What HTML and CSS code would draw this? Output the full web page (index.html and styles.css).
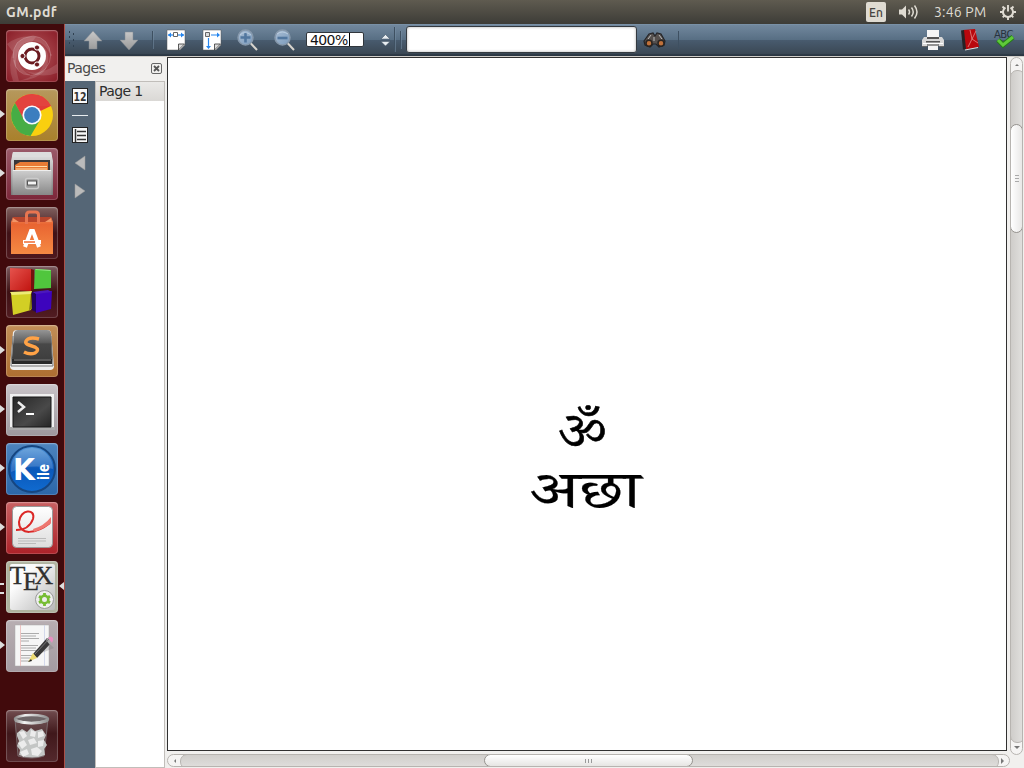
FILE: index.html
```html
<!DOCTYPE html>
<html lang="en">
<head>
<meta charset="utf-8">
<title>GM.pdf</title>
<link rel="stylesheet" href="styles.css">
</head>
<body>
<svg class="defs" width="0" height="0" aria-hidden="true">
  <defs>
    <linearGradient id="metal" x2="0" y2="1"><stop stop-color="#cfcfcf"/><stop offset="1" stop-color="#888"/></linearGradient>
    <linearGradient id="steel" x2="0" y2="1"><stop stop-color="#e6e6e6"/><stop offset="1" stop-color="#777"/></linearGradient>
    <linearGradient id="arrow" x2="0" y2="1"><stop stop-color="#c9c9c9"/><stop offset="1" stop-color="#999"/></linearGradient>
    <linearGradient id="orange" x2="0" y2="1"><stop stop-color="#f08a58"/><stop offset=".2" stop-color="#e96532"/><stop offset="1" stop-color="#f58a43"/></linearGradient>
    <linearGradient id="dark" x2="0" y2="1"><stop stop-color="#959595"/><stop offset=".4" stop-color="#5c5c5c"/><stop offset=".45" stop-color="#484848"/><stop offset="1" stop-color="#3d3d3d"/></linearGradient>
    <linearGradient id="screen" x2="1" y2="1"><stop stop-color="#272727"/><stop offset=".6" stop-color="#494949"/><stop offset="1" stop-color="#252525"/></linearGradient>
    <linearGradient id="blue" x2="0" y2="1"><stop stop-color="#5799d8"/><stop offset=".5" stop-color="#0b58b9"/><stop offset="1" stop-color="#106bd0"/></linearGradient>
    <linearGradient id="paper" x2="0" y2="1"><stop stop-color="#fff"/><stop offset="1" stop-color="#ddd"/></linearGradient>
    <linearGradient id="texpaper" x2="1" y2="1"><stop offset=".3" stop-color="#fbfbfb"/><stop offset="1" stop-color="#b9b9b9"/></linearGradient>
    <linearGradient id="red" x2="1" y2="1"><stop stop-color="#e6534d"/><stop offset="1" stop-color="#c11410"/></linearGradient>
    <linearGradient id="rim" x2="1" y2="0"><stop stop-color="#8d8d8d"/><stop offset=".3" stop-color="#f2f2f2"/><stop offset=".6" stop-color="#c9c9c9"/><stop offset="1" stop-color="#8d8d8d"/></linearGradient>
    <linearGradient id="lens" x2="1" y2="1"><stop stop-color="#a9bdd3"/><stop offset="1" stop-color="#7b9bbd"/></linearGradient>
  </defs>
</svg>

<header class="panel">
  <span class="panel-title">GM.pdf</span>
  <div class="indicators">
    <span class="lang">En</span>
    <svg class="volume" width="21" height="16" viewBox="0 0 21 16"><path d="M1 5.500h3l4-4v13l-4-4H1z" fill="#dfdbd2"/><path d="M10.500 5.500q2 2.500 0 5M13.500 3.500q3.500 4.500 0 9M16.500 1.500q5 6.500 0 13" fill="none" stroke="#dfdbd2" stroke-width="1.500"/></svg>
    <span class="clock">3:46 PM</span>
    <svg class="session" width="16" height="16" viewBox="0 0 16 16"><path d="M5.500 3.700A5 5 0 1 0 10.500 3.700" fill="none" stroke="#dfdbd2" stroke-width="2"/><path d="M8 1v6.500M2.500 2.500l2 2M13.500 2.500l-2 2M0 8h3M13 8h3M2.700 13.300l2-2M13.300 13.300l-2-2M8 13v3" fill="none" stroke="#dfdbd2" stroke-width="1.900"/></svg>
  </div>
</header>

<div class="desktop">
  <nav class="launcher">
    <div class="tile dash"><svg viewBox="0 0 52 52"><g fill="#fff" fill-opacity=".13"><path d="M7 28Q6 8 27 6Q43 7 45 26Q39 11 26 11Q10 13 12 30Q14 40 24 45Q8 43 7 28z"/><path d="M1 14Q14 4 30 7L26 12Q14 12 11 25Q8 34 13 51H7Q1 34 7 22z"/><path d="M36 15Q46 24 40 39Q32 50 12 51Q33 46 37 36Q42 24 36 15z"/><path d="M14 38Q30 49 51 34V43Q32 50 14 38z"/></g><g fill="none" stroke="#fff" stroke-opacity=".25" stroke-width=".7"><path d="M7 28Q6 8 27 6Q43 7 45 26M8 30Q10 45 24 45M45 24Q44 43 24 46"/></g><circle cx="26" cy="26" r="14" fill="#fff"/><circle cx="26" cy="26" r="7" fill="none" stroke="#6b1a20" stroke-width="3"/><g fill="#6b1a20" stroke="#fff"><circle cx="16.500" cy="26" r="2.600"/><circle cx="31" cy="17.500" r="2.600"/><circle cx="31" cy="34.500" r="2.600"/></g></svg></div>
    <div class="tile chrome running"><svg viewBox="0 0 52 52"><circle cx="26" cy="26" r="21" fill="#f9cf0f"/><path d="M26 26L9 14A21 21 0 0 1 44.800 17z" fill="#e33b37"/><path d="M9 14Q16 5 26 5Q39 5 45 17H26L17 30z" fill="#e3423e"/><path d="M17.500 30L9 14A21 21 0 0 0 24.500 47L34 31z" fill="#46ad45"/><circle cx="26" cy="26" r="9.600" fill="#f8fbff"/><circle cx="26" cy="26" r="7.900" fill="#3c7ebf"/></svg></div>
    <div class="tile files running"><svg viewBox="0 0 52 52"><path d="M7 4h38l2 9v34H5V13z" fill="url(#steel)"/><path d="M7 4h38l1 5H6z" fill="#ddd"/><path d="M8 12h36v12H8z" fill="#39383a"/><path d="M9 17l5-3h28v9H9z" fill="#e77b35"/><path d="M10 18.500h31M10 21h31" stroke="#ffddaa"/><path d="M6.500 22h39v25h-39z" fill="url(#metal)"/><path d="M7 22.500h38" stroke="#eee"/><rect x="19.500" y="30.500" width="13" height="10" rx="2" fill="#999" stroke="#ccc" stroke-width="1.500"/><rect x="21.500" y="33" width="9" height="4" fill="#f5f5f5" stroke="#555"/></svg></div>
    <div class="tile software"><svg viewBox="0 0 52 52"><path d="M7 10h38l2 5v32H5V15z" fill="url(#orange)"/><path d="M7 10l-1 5h40l-1-5z" fill="#b8452c"/><path d="M7 11l6 4H6zM45 11l-6 4h7z" fill="#f29566"/><path d="M20.500 17V8q0-3 3-3h6q3 0 3 3v9" fill="none" stroke="#e87550" stroke-width="3"/><path d="M19 40L25 24h2l6 16" fill="none" stroke="#fff" stroke-width="4"/><path d="M17 35h18" stroke="#fff" stroke-width="4"/><path d="M18 35h11" stroke="#ef6a32" stroke-width="1.500"/></svg></div>
    <div class="tile blocks"><svg viewBox="0 0 52 52"><path d="M4 2l21 1v22l-21-1z" fill="url(#red)"/><path d="M25 3l3 1v19l-3 2z" fill="#74120e"/><path d="M29 3l16 1v18l-17 1z" fill="#50c63d"/><path d="M29 3l16 1-1 1-14-1z" fill="#91e783"/><path d="M5 27l20-1v18L7 49z" fill="#d2cf25"/><path d="M4 26l22-1-1 3-19 1z" fill="#eeeb76"/><path d="M25 26l1 17-3 1 2-17z" fill="#888415"/><path d="M29 27l17-2-1 18-15 4z" fill="#3d04bd"/><path d="M26 26l16-2 4 2-16 2z" fill="#4b18bd"/><path d="M26 26l4 2v18l-4-2z" fill="#210163"/></svg></div>
    <div class="tile sublime running"><svg viewBox="0 0 52 52"><path d="M7 7q1-2 4-2h30q3 0 4 2l3 34q0 4-4 4H8q-4 0-4-4z" fill="#eee"/><path d="M7 11L5 41h42l-2-30" fill="none" stroke="#777"/><path d="M8 8q1-3 4-3h29q4 0 4 4l1 24q0 3-3 3H9q-3 0-3-3z" fill="url(#dark)"/><path d="M6 34h40v5H6z" fill="#292929"/><path d="M8 35h37" stroke="#888"/><path d="M33 14q-7-2-11 0-5 4 1 6l6 2q5 3 0 6-5 2-11-1" fill="none" stroke="#ffa246" stroke-width="3.500"/></svg></div>
    <div class="tile terminal running"><svg viewBox="0 0 52 52"><path d="M4 10h44v34H4z" fill="#f0f0f0"/><path d="M3 43h46v3H3z" fill="#aaa"/><path d="M7 13h38v30H7z" fill="url(#screen)" stroke="#171717"/><path d="M12 18l6 5-6 5" fill="none" stroke="#eee" stroke-width="2.500"/><path d="M20 30h8" stroke="#fff" stroke-width="2"/></svg></div>
    <div class="tile kile running"><svg viewBox="0 0 52 52"><circle cx="26" cy="26" r="23" fill="url(#blue)" stroke="#164681" stroke-width="2"/><path d="M5 26a21 21 0 0 1 42 0Q26 20 5 29" fill="#fff" opacity=".16"/><text class="kile-k" x="7" y="37" textLength="22" lengthAdjust="spacingAndGlyphs">K</text><text class="kile-ile" transform="translate(43 37) rotate(-90)" textLength="16" lengthAdjust="spacingAndGlyphs">ile</text></svg></div>
    <div class="tile reader running"><svg viewBox="0 0 52 52"><rect x="6.500" y="4.500" width="40" height="41" rx="4" fill="url(#paper)" stroke="#999"/><path d="M10 28Q23 28 27 17C30 6 14 7 13 20c0 14 17 12 31 1" fill="none" stroke="#db2827" stroke-width="2"/><path d="M27 27Q38 24 45 15v6q-7 6-17 9z" fill="#ed7770"/><path d="M12 36.500h28M12 39h28M12 41.500h18" stroke="#bbb"/></svg></div>
    <div class="tile tex running multi active"><svg viewBox="0 0 52 52"><rect x="4" y="3" width="45" height="46" rx="2" fill="url(#texpaper)"/><text class="tex-t" x="3.500 17 28.500" y="23 29 23">TEX</text><circle cx="38.500" cy="38.500" r="9" fill="#eee" stroke="#999"/><circle cx="38.500" cy="38.500" r="3.800" fill="none" stroke="#77bd35" stroke-width="2.600"/><path d="M38.500 32v3M38.500 42v3M33 35.300l2.500 1.500M41.500 40.200l2.500 1.500M33 41.700l2.500-1.500M41.500 36.800l2.500-1.500" stroke="#77bd35" stroke-width="2.800"/></svg></div>
    <div class="tile editor running"><svg viewBox="0 0 52 52"><path d="M9 5h34v41H9z" fill="#f6f6f6" stroke="#aaa" stroke-width=".5"/><path d="M14.500 5v41" stroke="#e9b0ad" stroke-width=".7"/><path d="M38.500 5v41" stroke="#c5cde7" stroke-width=".7"/><path d="M15 13.500h18M15 16h15M15 18.500h18M15 21h8M15 25.500h17M15 28h15M15 30.500h17M15 35.500h12M15 38h9M15 41h8" stroke="#999" stroke-width=".8"/><path d="M26 39l18-15 4 4-15 6z" fill="#777" opacity=".3"/><path d="M27 34L41 18l5 4-15 16z" fill="#393939"/><path d="M27 33l4 5-9 4z" fill="#ecdb73"/><path d="M22 42l3-3 1 2z" fill="#222"/><path d="M40 20l3-3 5 4-4 4z" fill="#aaa"/><path d="M42 18q3-3 5 0 1 2-1 5z" fill="#e98ec1"/><path d="M29 34l14-15" stroke="#777"/></svg></div>
    <div class="tile trash"><svg viewBox="0 0 52 52"><path d="M9 9l3 37q14 4 26 0l4-37" fill="#aaa" fill-opacity=".2" stroke="#81777a" stroke-width=".8"/><path d="M11 23l5-4 5 3 4-4 4 3 7-2 4 6-2 5 3 5-3 4 1 6q-13 5-26 0l1-5-3-4 2-5-2-5z" fill="#c4c6c5"/><path d="M13 22l5-1 3 5-4 3zM25 20l5 2-1 5-5-1zM32 22l5-1 1 5-6 2zM12 33l6-3 3 5-5 4zM22 30l6-2 3 5-7 2zM32 31l6-1-1 6-5 1zM14 42l7-3 2 5-6 3zM25 39l6-2 5 4-4 5-6-1z" fill="#ececec"/><ellipse cx="25.500" cy="9" rx="16.500" ry="4" fill="#6e6668" stroke="url(#rim)" stroke-width="2.500"/><path d="M8 8q17 8 35 0l-1 4q-16 5-33 0z" fill="url(#rim)"/></svg></div>
  </nav>

  <main class="app">
    <div class="toolbar">
      <svg class="tools" width="959" height="32" viewBox="65 24 959 32">
        <path d="M69 32h1M73 34h1M69 37h1M73 40h1M69 43h1M73 46h1" stroke="#304050" stroke-width="2"/>
        <path d="M93 31l9 10h-5v8h-8v-8h-5zM129 50l-9-10h5v-8h8v8h5z" fill="url(#arrow)" stroke="#808890" stroke-width=".5"/>
        <path d="M152.500 31v18M394.500 27v25M400.500 31v18M678.500 31v18" stroke="#3e5061"/>
        <path d="M153.500 31v18M395.500 27v25M401.500 31v18" stroke="#7890a5" stroke-opacity=".5"/>
        <path d="M167 30h18v15l-5 5h-13z" fill="#fff" stroke="#555" stroke-width=".5"/><path d="M178.500 50v-6h6z" fill="#ddd" stroke="#333" stroke-width=".8"/><path d="M168 35h16" stroke="#2586ef" stroke-width="1.200"/><path d="M168 35l3-2.500v5zM184 35l-3-2.500v5z" fill="#2586ef"/><path d="M173.500 32.500h4v4h-4z" fill="#fff" stroke="#666"/>
        <path d="M203 30h18v15l-5 5h-13z" fill="#fff" stroke="#555" stroke-width=".5"/><path d="M214.500 50v-6h6z" fill="#ddd" stroke="#333" stroke-width=".8"/><path d="M211 35h8M208.500 38v8" stroke="#2586ef" stroke-width="1.200"/><path d="M220 35l-3-2.500v5zM208.500 49l-2.500-3h5z" fill="#2586ef"/><path d="M205.500 32.500h4v4h-4z" fill="#ddd" stroke="#666"/>
        <g><path d="M250.500 43l6.500 7" stroke="#d8d4cd" stroke-width="2"/><circle cx="245.500" cy="37.500" r="7.500" fill="url(#lens)" stroke="#8698ab" stroke-width="1.500"/><path d="M240.500 37.500h10M245.500 32.500v10" stroke="#52779f" stroke-width="2.600"/><path d="M240 35q5-5 11 0" fill="none" stroke="#c4d4e4" stroke-width=".8"/></g>
        <g><path d="M287.500 43l6.500 7" stroke="#d8d4cd" stroke-width="2"/><circle cx="282.500" cy="37.500" r="7.500" fill="url(#lens)" stroke="#8698ab" stroke-width="1.500"/><path d="M277.500 38h10" stroke="#52779f" stroke-width="2.600"/><path d="M277 34q5-4 11 0" fill="none" stroke="#c4d4e4" stroke-width=".8"/></g>
        <path d="M385.500 34.500l4.500 4.500h-9zM385.500 46l4.500-4.500h-9z" fill="#e8edf1" stroke="#3d4f60" stroke-width=".5"/>
        <path d="M649 34l4-1 2 3 2-3 4 1 4 7-1 4-5 2-3-3h-3l-3 3-5-2-1-4z" fill="#55504e" stroke="#242427" stroke-width="1.200"/><circle cx="649" cy="43.200" r="3" fill="#c0713a" stroke="#292421" stroke-width="1.500"/><circle cx="661" cy="43.200" r="3" fill="#c0713a" stroke="#292421" stroke-width="1.500"/><path d="M651 35l-3 4M659 35l3 4M654 37v4" stroke="#bbb"/>
        <path d="M927 30h12v9h-12z" fill="#f5f5f5"/><path d="M924 37h18l2 3v6h-22v-6z" fill="#d7d7d7"/><path d="M927 37h12v2h-12zM926 41h14v1.500h-14z" fill="#555"/><path d="M923 43.500h20" stroke="#fff"/><path d="M928 44h10v6h-10z" fill="#f4f4f4"/><path d="M927 45h12" stroke="#333"/><path d="M922 46.500h5M939 46.500h5" stroke="#666"/>
        <path d="M963 30l12-1 4 18-14 2.500z" fill="#b9080e"/><path d="M961 30.500l3-.500 2 19-3 .500z" fill="#272326"/><path d="M970 30l2 9-4 8M972 39l6 4M972 39l4-8" fill="none" stroke="#e58c8a" stroke-width=".8"/><path d="M965 50l13-2.500" stroke="#ddd"/>
        <text class="abc" x="994" y="38">ABC</text><path d="M998 40l5 5 10-8" fill="none" stroke="#257b17" stroke-width="5"/><path d="M998 40l5 5 10-8" fill="none" stroke="#5fc93a" stroke-width="3"/>
      </svg>
      <div class="zoom-field">400%</div>
      <div class="search-field"></div>
    </div>
    <div class="workspace">
      <aside class="sidebar">
        <div class="side-head"><span>Pages</span><svg width="11" height="11" viewBox="0 0 11 11"><rect x=".5" y=".5" width="10" height="10" rx="1.500" fill="none" stroke="#666"/><path d="M3 3l5 5M8 3l-5 5" stroke="#555" stroke-width="1.800"/></svg></div>
        <div class="side-body">
          <svg class="side-tools" width="31" height="120" viewBox="0 0 31 120"><rect x="7.500" y="7.500" width="15" height="15" fill="#f8f8f8" stroke="#222"/><text class="page-number" x="8.500" y="19.500" textLength="13" lengthAdjust="spacingAndGlyphs">12</text><path d="M7 34.500h16" stroke="#e8edf0"/><rect x="7.500" y="46.500" width="15" height="15" fill="#f8f8f8" stroke="#222"/><path d="M10.500 48v13" stroke="#333" stroke-width="1.500"/><path d="M12 50.500h9M12 54.500h9M12 58.500h9" stroke="#333" stroke-width="1.300"/><path d="M20 75v14l-10-7z" fill="#bbb" stroke="#999" stroke-width=".5"/><path d="M10 103v14l10-7z" fill="#bbb" stroke="#999" stroke-width=".5"/></svg>
          <div class="page-list"><div class="page-item">Page 1</div></div>
        </div>
      </aside>
      <section class="viewer">
        <div class="document" lang="sa"><div class="om">ॐ</div><div class="word">अछा</div></div>
        <div class="vbar"><span class="up"></span><div class="vthumb"><i></i></div><span class="down"></span></div>
        <div class="hbar"><span class="left"></span><div class="hthumb"><i></i></div><span class="right"></span></div>
      </section>
    </div>
  </main>
</div>
</body>
</html>
```
FILE: styles.css
```css
* { box-sizing: border-box; }
body { margin: 0; width: 1024px; height: 768px; overflow: hidden; background: #f1f0ee; font: 14px "DejaVu Sans", sans-serif; letter-spacing: -.6px; color: #3c3c3c; }
svg { display: block; letter-spacing: 0; }
.defs { position: absolute; }
.panel { height: 24px; display: flex; align-items: center; justify-content: space-between; padding: 0 8px 0 6px; background: linear-gradient(#5f5b50, #3d3c37); color: #dfdbd2; font-family: Ubuntu, "Noto Sans", sans-serif; letter-spacing: 0; }
.panel-title { font-size: 14px; font-weight: bold; letter-spacing: .5px; }
.indicators { display: flex; align-items: center; }
.lang { width: 20px; height: 20px; background: #dfdbd2; border-radius: 2px; color: #45433e; font-size: 12px; font-weight: 500; line-height: 21px; text-align: center; }
.volume { margin-left: 12px; }
.clock { font-size: 14px; letter-spacing: .2px; width: 53px; margin: 0 13px 0 15px; white-space: nowrap; }
.desktop { display: flex; height: 744px; }
.launcher { width: 65px; background: #410a0c; border-right: 1px solid #aa5048; padding: 6px 0 6px 6px; display: flex; flex-direction: column; gap: 7px; }
.tile { position: relative; width: 52px; height: 52px; border-radius: 4px; box-shadow: inset 0 0 0 1px #ffffff28, inset 0 1px 2px #ffffff40; flex: none; }
.tile svg { width: 52px; height: 52px; }
.dash { background: radial-gradient(circle, #b85c5f, #881b26); }
.chrome { background: linear-gradient(#b6985d, #a9802b); }
.files { background: linear-gradient(#9a5a69, #7c2639); }
.software { background: linear-gradient(#80615f, #401217 50%, #4f181d); }
.blocks { background: linear-gradient(#7b5a5d, #3d1013 50%, #521c22); }
.sublime { background: linear-gradient(#c28e58, #ae6e31); }
.terminal { background: linear-gradient(#c9c4c8, #9e989e); }
.kile { background: linear-gradient(#4c83be, #2c67a9); }
.reader { background: linear-gradient(#c86062, #ad2229); }
.tex { background: #afb39f; }
.editor { background: linear-gradient(#b8aeb2, #a49ba1); }
.trash { margin-top: auto; background: linear-gradient(#714c4f, #40181b 45%, #54292d); }
.running::before { content: ""; position: absolute; left: -6px; top: 21px; border: 4px solid transparent; border-left: 5px solid #ddd; border-right: 0; }
.multi::before { border: 0; width: 4px; height: 7px; top: 22px; border-top: 2px solid #ddd; border-bottom: 2px solid #ddd; }
.active::after { content: ""; position: absolute; right: -6px; top: 21px; border: 4px solid transparent; border-right: 5px solid #ddd; border-left: 0; }
.kile-k { font: bold 31px "DejaVu Sans", sans-serif; fill: #fff; }
.kile-ile { font: bold 15px "DejaVu Sans", sans-serif; fill: #fff; }
.tex-t { font: 26px "Liberation Serif", serif; fill: #303030; stroke: #303030; stroke-width: .3; }
.app { width: 959px; display: flex; flex-direction: column; }
.toolbar { position: relative; height: 32px; background: linear-gradient(#7e96ad 0, #71879d 4%, #576e83 50%, #485b6e 51%, #3b4855 92%, #2b3743 96%); }
.zoom-field { position: absolute; left: 241px; top: 8px; width: 58px; height: 15px; border: 1px solid #30363c; border-radius: 2px; background: #fff; color: #111; line-height: 15px; padding-left: 3px; letter-spacing: -.6px; }
.zoom-field::after { content: ""; display: inline-block; width: 1px; height: 13px; margin-left: 1px; background: #000; vertical-align: top; }
.search-field { position: absolute; left: 341px; top: 2px; width: 231px; height: 27px; border: 1px solid #343a40; border-radius: 3px; background: #fff; box-shadow: inset 0 0 3px #aaa; }
.abc { font: 10px "DejaVu Sans", sans-serif; fill: #27333e; letter-spacing: -.5px; }
.workspace { height: 712px; display: flex; border-top: 1px solid #d0cdc8; }
.sidebar { width: 102px; display: flex; flex-direction: column; border-right: 2px solid #efeeec; }
.side-head { height: 24px; padding: 0 3px 2px 2px; letter-spacing: -.6px; color: #4a4a4a; display: flex; align-items: center; justify-content: space-between; }
.side-body { flex: 1; display: flex; background: #556676; }
.page-number { font: bold 12px "DejaVu Sans Condensed", "DejaVu Sans", sans-serif; fill: #333; }
.page-list { width: 70px; background: #fff; border: 1px solid #c1beba; margin-left: -1px; }
.page-item { height: 19px; padding-left: 3px; line-height: 18px; background: linear-gradient(#eae9e7, #dad8d5); color: #2d2d2d; }
.viewer { flex: 1; display: grid; grid-template: 694px 17px / 840px 17px; background: #f1f0ee; }
.document { border: 1px solid #303030; background: #fff; color: #000; font-family: "Noto Serif Devanagari", "Noto Sans Devanagari", "Noto Sans", serif; letter-spacing: 0; padding: 352px 0 0; -webkit-text-stroke: .6px #000; }
.om { width: 100px; margin-left: 364px; text-align: center; font-size: 53px; line-height: 59px; transform: scale(1.04, .89); }
.word { width: 101px; margin-left: 367px; text-align: center; font-size: 53px; line-height: 62px; transform: scaleX(1.34); -webkit-text-stroke-width: .2px; }
.vbar, .hbar { position: relative; border: 1px solid #b7b4b0; border-radius: 7px; display: flex; justify-content: space-between; overflow: hidden; background: #f5f4f3; }
.vbar { width: 13px; height: 698px; margin-left: 3px; flex-direction: column; }
.vbar > span, .hbar > span { display: flex; align-items: center; justify-content: center; }
.up { height: 14px; }
.up::after { content: ""; border: 2px solid transparent; border-bottom-color: #777; border-top: 0; }
.down { height: 14px; }
.down::after { content: ""; border: 3px solid transparent; border-top-color: #777; border-bottom: 0; }
.vbar::before { content: ""; position: absolute; left: -1px; top: 12px; width: 13px; height: 671px; border: 1px solid #b7b4b0; border-radius: 7px; background: linear-gradient(90deg, #cfcdca, #e3e2e0); }
.hbar::before { content: ""; position: absolute; left: 12px; top: -1px; width: 817px; height: 13px; border: 1px solid #b7b4b0; border-radius: 7px; background: linear-gradient(#d0cecb, #e1dfdd); }
.vthumb, .hthumb { position: absolute; border: 1px solid #96938f; border-radius: 7px; background: linear-gradient(90deg, #fff, #e9e8e7); display: flex; align-items: center; justify-content: center; }
.vthumb { left: -1px; top: 66px; width: 13px; height: 109px; }
.vthumb i { width: 4px; height: 7px; background: repeating-linear-gradient(#aaa 0 1px, transparent 1px 3px); }
.hbar { width: 843px; height: 13px; margin-top: 3px; }
.hthumb { left: 316px; top: -1px; width: 209px; height: 13px; background: linear-gradient(#fff, #e6e5e3); }
.hthumb i { width: 7px; height: 4px; background: repeating-linear-gradient(90deg, #999 0 1px, transparent 1px 3px); }
.left { width: 13px; }
.left::after { content: ""; border: 2px solid transparent; border-right-color: #777; border-left: 0; }
.right { width: 13px; }
.right::after { content: ""; border: 3px solid transparent; border-left-color: #777; border-right: 0; }
```
